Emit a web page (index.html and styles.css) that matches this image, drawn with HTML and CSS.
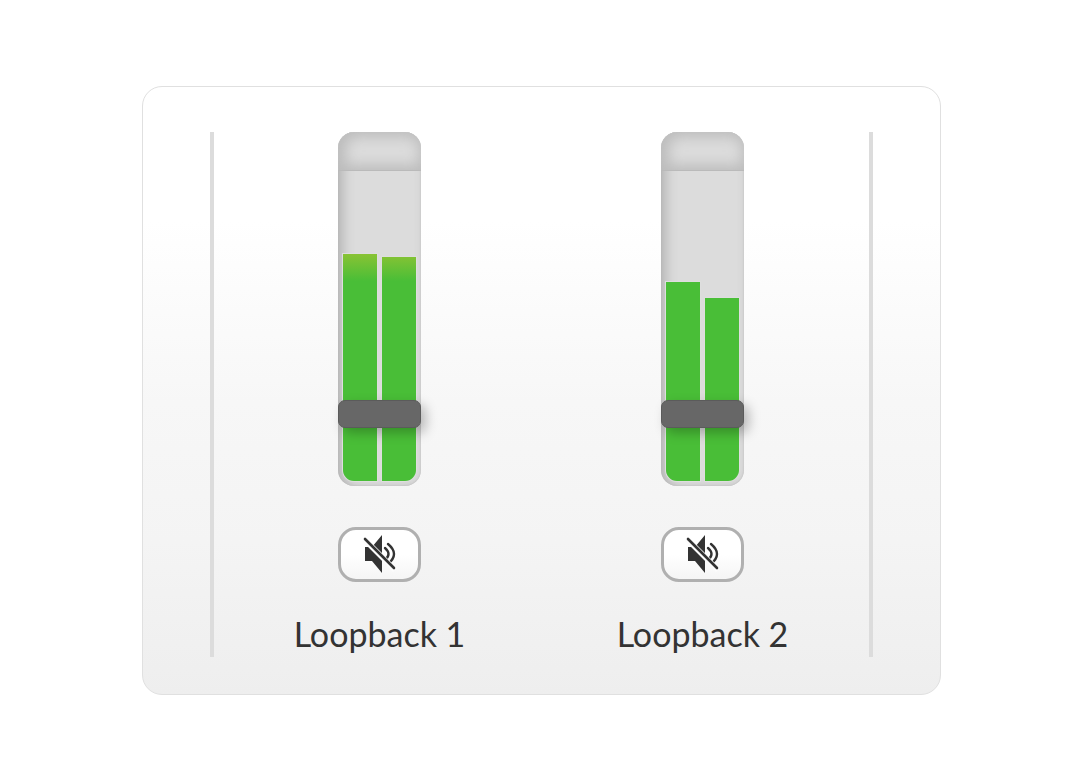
FILE: index.html
```html
<!DOCTYPE html>
<html lang="en">
<head>
<meta charset="utf-8">
<meta name="viewport" content="width=device-width, initial-scale=1">
<title>Loopback mixer</title>
<link rel="stylesheet" href="styles.css">
</head>
<body>
<svg width="0" height="0" class="sprite" aria-hidden="true">
  <symbol id="muted" viewBox="0 0 40 42">
    <path fill="#333" d="M5 14h7L22 2v38L12 28H5z"/>
    <path fill="none" stroke="#333" stroke-width="2.4" stroke-linecap="round" d="M25 15q7 6 0 12M28 11q12 10 0 20"/>
    <path fill="none" stroke="#fcfcfc" stroke-width="5.5" d="M4 6l31 31"/>
    <path fill="none" stroke="#333" stroke-width="2.6" stroke-linecap="round" d="M5 6l29 29"/>
  </symbol>
</svg>
<main class="mixer">
  <div class="channels">
    <section class="channel">
      <div class="meter">
        <div class="clip"></div>
        <div class="levels">
          <div class="level" style="height:227px"></div>
          <div class="level" style="height:224px"></div>
        </div>
        <input class="fader" type="range" min="0" max="326" value="58" aria-labelledby="name1">
      </div>
      <button class="mute" type="button" aria-label="Mute Loopback 1"><svg class="icon" aria-hidden="true"><use href="#muted"/></svg></button>
      <h2 class="name" id="name1">Loopback 1</h2>
    </section>
    <section class="channel">
      <div class="meter">
        <div class="clip"></div>
        <div class="levels">
          <div class="level" style="height:199px"></div>
          <div class="level" style="height:183px"></div>
        </div>
        <input class="fader" type="range" min="0" max="326" value="58" aria-labelledby="name2">
      </div>
      <button class="mute" type="button" aria-label="Mute Loopback 2"><svg class="icon" aria-hidden="true"><use href="#muted"/></svg></button>
      <h2 class="name" id="name2">Loopback 2</h2>
    </section>
  </div>
</main>
</body>
</html>
```
FILE: styles.css
```css
* { box-sizing: border-box; }
body {
  margin: 0;
  min-height: 100vh;
  display: flex;
  align-items: center;
  justify-content: center;
  padding: 24px 145px 24px 142px;
  background: #fff;
  color: #333;
  font-family: Lato, "Open Sans", sans-serif;
}
.sprite { position: absolute; }
.mixer {
  flex: 1;
  max-width: 960px;
  padding: 45px 67px 37px;
  border: 1px solid #e0e0e0;
  border-radius: 20px;
  background: linear-gradient(#fff 22%, #f7f7f7 52%, #f4f4f4 75%, #eee);
}
.channels {
  display: flex;
  padding: 0 5px 0 4px;
  border: solid #dcdcdc;
  border-width: 0 4px;
}
.channel {
  flex: 1;
  display: flex;
  flex-direction: column;
  align-items: center;
}
.meter {
  position: relative;
  display: flex;
  flex-direction: column;
  justify-content: space-between;
  width: 83px;
  height: 354px;
  border-radius: 16px;
  background: #dcdcdc;
  box-shadow: inset 5px 3px 12px #b4b4b4, inset 0 0 2px #bbb;
}
.clip {
  height: 39px;
  border-bottom: 1px solid #bababa;
  border-radius: 16px 16px 0 0;
  background: #dcdcdc;
  box-shadow: inset 3px 0 14px 5px #bcbcbc;
}
.levels {
  display: flex;
  align-items: flex-end;
  gap: 5px;
  margin: 5px;
}
.level {
  flex: 1;
  background: linear-gradient(to top, #49be37 200px, #8bc334 228px) bottom / 100% 228px;
  box-shadow: 0 0 0 1px #dedede;
}
.level:first-child { border-bottom-left-radius: 11px; }
.level:last-child { border-bottom-right-radius: 11px; }
.fader {
  position: absolute;
  inset: 0;
  width: 100%;
  height: 100%;
  margin: 0;
  appearance: none;
  background: none;
  writing-mode: vertical-lr;
  direction: rtl;
}
.fader::-webkit-slider-thumb {
  appearance: none;
  width: 83px;
  height: 28px;
  border: 1px solid #5b5b5b;
  border-radius: 7px;
  background: #676767;
  box-shadow: 5px 5px 12px rgba(0, 0, 0, .25);
}
.mute {
  display: flex;
  align-items: center;
  justify-content: center;
  width: 83px;
  height: 55px;
  margin-top: 41px;
  padding: 0;
  border: 3px solid #b0b0b0;
  border-radius: 18px;
  background: linear-gradient(#fff 50%, #f5f5f5);
}
.icon { width: 40px; height: 42px; }
.name {
  margin: 32px 0 3px;
  font-size: 34px;
  font-weight: 400;
  line-height: 40px;
}
```
